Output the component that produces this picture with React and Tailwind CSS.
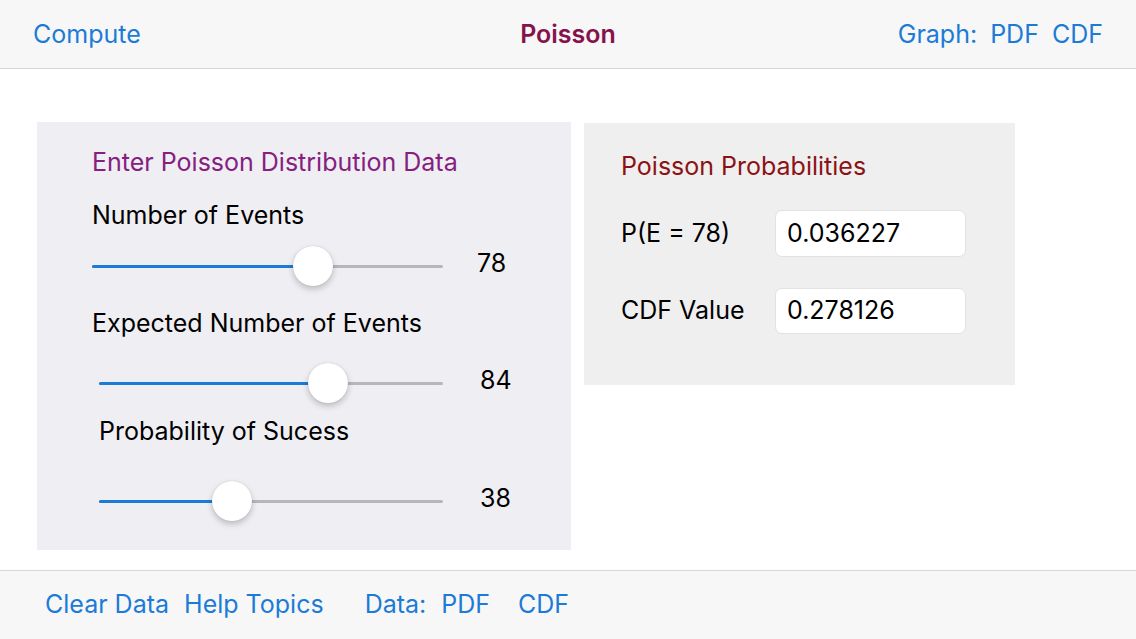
import React from "react";

const font = { fontFamily: "Inter, 'Noto Sans', sans-serif" };

function Slider({ trackWidth, frac, value, gap }) {
  return (
    <div className="flex items-center h-[40px]">
      <div className="relative h-[40px]" style={{ width: trackWidth }}>
        <div className="absolute left-0 right-0 top-[19px] h-[3px] rounded-full bg-[#b7b7bb]" />
        <div
          className="absolute left-0 top-[19px] h-[3px] rounded-full bg-[#1c7bd6]"
          style={{ width: trackWidth * frac }}
        />
        <div
          className="absolute top-0 w-[40px] h-[40px] rounded-full bg-white shadow-[0_3px_6px_rgba(0,0,0,0.22),0_0_1px_rgba(0,0,0,0.2)]"
          style={{ left: trackWidth * frac - 20 }}
        />
      </div>
      <span className="text-[25px] text-black leading-none pb-[6px]" style={{ marginLeft: gap }}>
        {value}
      </span>
    </div>
  );
}

export default function App() {
  return (
    <div className="w-[1136px] h-[639px] flex flex-col bg-white overflow-hidden" style={font}>
      <header className="h-[69px] shrink-0 bg-[#f7f7f8] border-b border-[#d6d6d8] relative flex items-center px-[33px] pt-[2px] text-[25px] text-[#1c7bd6]">
        <span>Compute</span>
        <span className="absolute left-1/2 -translate-x-1/2 font-semibold text-[#86124c]">Poisson</span>
        <div className="ml-auto flex gap-[13px]">
          <span>Graph:</span>
          <span>PDF</span>
          <span>CDF</span>
        </div>
      </header>

      <main className="flex-1 flex items-start pl-[37px] pt-[53px] gap-[13px]">
        <section className="w-[534px] h-[428px] bg-[#efeef3] flex flex-col">
          <div className="ml-[55px] mt-[26px] h-[30px] flex items-center text-[25px] text-[#85207f]">
            Enter Poisson Distribution Data
          </div>
          <div className="ml-[55px] mt-[23px] h-[30px] flex items-center text-[25px] text-black">
            Number of Events
          </div>
          <div className="ml-[55px] mt-[15px]">
            <Slider trackWidth={351} frac={0.63} value="78" gap={34} />
          </div>
          <div className="ml-[55px] mt-[23px] h-[30px] flex items-center text-[25px] text-black">
            Expected Number of Events
          </div>
          <div className="ml-[62px] mt-[24px]">
            <Slider trackWidth={344} frac={0.666} value="84" gap={37} />
          </div>
          <div className="ml-[62px] mt-[14px] h-[30px] flex items-center text-[25px] text-black">
            Probability of Sucess
          </div>
          <div className="ml-[62px] mt-[34px]">
            <Slider trackWidth={344} frac={0.387} value="38" gap={37} />
          </div>
        </section>

        <section className="mt-[1px] w-[431px] h-[262px] bg-[#efeff0] flex flex-col pl-[37px]">
          <div className="mt-[29px] h-[30px] flex items-center text-[25px] text-[#8b1313]">
            Poisson Probabilities
          </div>
          <div className="mt-[28px] flex items-center">
            <span className="w-[154px] text-[25px] text-black">P(E = 78)</span>
            <div className="w-[191px] h-[47px] bg-white rounded-[7px] border border-[#e2e2e4] flex items-center pl-[11px] text-[25px] text-black">
              0.036227
            </div>
          </div>
          <div className="mt-[31px] flex items-center">
            <span className="w-[154px] text-[25px] text-black">CDF Value</span>
            <div className="w-[191px] h-[46px] bg-white rounded-[7px] border border-[#e2e2e4] flex items-center pl-[11px] text-[25px] text-black">
              0.278126
            </div>
          </div>
        </section>
      </main>

      <footer className="h-[69px] shrink-0 bg-[#f7f7f8] border-t border-[#d6d6d8] flex items-center pl-[45px] text-[25px] text-[#1c7bd6]">
        <span>Clear Data</span>
        <span className="ml-[15px]">Help Topics</span>
        <span className="ml-[41px]">Data:</span>
        <span className="ml-[15px]">PDF</span>
        <span className="ml-[28px]">CDF</span>
      </footer>
    </div>
  );
}
